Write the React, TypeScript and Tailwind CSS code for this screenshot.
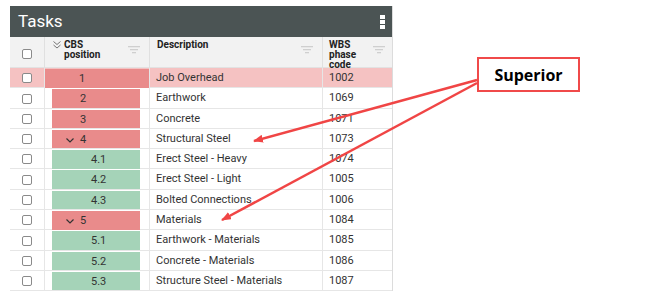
import React from 'react';

interface TaskRow {
  cbs: string;
  level: number;
  expandable?: boolean;
  superior?: boolean;
  description: string;
  wbs: string;
  selected?: boolean;
}

const rows: TaskRow[] = [
  { cbs: '1', level: 0, superior: true, description: 'Job Overhead', wbs: '1002', selected: true },
  { cbs: '2', level: 0, superior: true, description: 'Earthwork', wbs: '1069' },
  { cbs: '3', level: 0, superior: true, description: 'Concrete', wbs: '1071' },
  { cbs: '4', level: 0, superior: true, expandable: true, description: 'Structural Steel', wbs: '1073' },
  { cbs: '4.1', level: 1, description: 'Erect Steel - Heavy', wbs: '1074' },
  { cbs: '4.2', level: 1, description: 'Erect Steel - Light', wbs: '1005' },
  { cbs: '4.3', level: 1, description: 'Bolted Connections', wbs: '1006' },
  { cbs: '5', level: 0, superior: true, expandable: true, description: 'Materials', wbs: '1084' },
  { cbs: '5.1', level: 1, description: 'Earthwork - Materials', wbs: '1085' },
  { cbs: '5.2', level: 1, description: 'Concrete - Materials', wbs: '1086' },
  { cbs: '5.3', level: 1, description: 'Structure Steel - Materials', wbs: '1087' },
];

const Checkbox = () => (
  <span className="block w-[10px] h-[10px] rounded-[2px] border border-[#8a8a8a] bg-white" />
);

const FilterIcon = () => (
  <svg width="12" height="8" viewBox="0 0 12 8" className="shrink-0">
    <rect x="0" y="0" width="12" height="1.3" fill="#cfcfcf" />
    <rect x="2" y="3" width="8" height="1.3" fill="#cfcfcf" />
    <rect x="4" y="6" width="4" height="1.3" fill="#cfcfcf" />
  </svg>
);

const Chevron = () => (
  <svg width="8" height="5" viewBox="0 0 8 5" className="mr-[4px]">
    <path d="M0.5 0.5 L4 4 L7.5 0.5" stroke="#333" strokeWidth="1.2" fill="none" />
  </svg>
);

const App: React.FC = () => {
  return (
    <div className="relative w-[646px] h-[292px] overflow-hidden bg-white font-['Roboto',sans-serif]">
      <div className="ml-[10px] mt-[6px] w-[383px] border-r border-[#dcdcdc]">
        <div className="h-[31px] bg-[#4b5454] flex items-center justify-between pl-[8px] pr-[7px]">
          <span className="text-white text-[17px] leading-none">Tasks</span>
          <div className="flex flex-col gap-[1px]">
            <span className="block w-[5px] h-[4px] bg-white" />
            <span className="block w-[5px] h-[4px] bg-white" />
            <span className="block w-[5px] h-[4px] bg-white" />
          </div>
        </div>

        <div className="grid grid-cols-[35px_105px_173px_70px] h-[31px] bg-[#f2f2f2] border-b border-[#e2e2e2] text-[10px] font-bold text-[#222] leading-[10px]">
          <div className="flex items-center justify-center border-r border-[#e0e0e0]">
            <Checkbox />
          </div>
          <div className="flex items-start pt-[3px] pl-[8px] pr-[9px] border-r border-[#e0e0e0]">
            <svg width="8" height="8" viewBox="0 0 8 8" className="mt-[1px] mr-[3px] shrink-0">
              <path d="M0.5 0.5 L4 3.5 L7.5 0.5 M0.5 4 L4 7 L7.5 4" stroke="#777" strokeWidth="1" fill="none" />
            </svg>
            <span className="flex-1">CBS<br />position</span>
            <span className="mt-[6px]"><FilterIcon /></span>
          </div>
          <div className="flex items-start pt-[3px] pl-[7px] pr-[9px] border-r border-[#e0e0e0]">
            <span className="flex-1">Description</span>
            <span className="mt-[6px]"><FilterIcon /></span>
          </div>
          <div className="flex items-start pt-[3px] pl-[6px] pr-[8px]">
            <span className="flex-1">WBS<br />phase<br />code</span>
            <span className="mt-[6px]"><FilterIcon /></span>
          </div>
        </div>

        {rows.map(row => (
          <div
            key={row.cbs}
            className={`grid grid-cols-[35px_105px_173px_70px] h-[20.3px] border-b border-[#e6e6e6] text-[11px] text-[#333] ${row.selected ? 'bg-[#f5c2c2]' : 'bg-white'}`}
          >
            <div className="flex items-center justify-center border-r border-[#e6e6e6]">
              <Checkbox />
            </div>
            <div className={`flex items-stretch py-[1px] border-r border-[#e6e6e6] ${row.selected ? 'px-0' : 'pl-[7px] pr-[9px]'}`}>
              <div
                className={`flex-1 flex items-center pt-[2px] ${row.superior ? 'bg-[#e98b8b]' : 'bg-[#a5d3b8]'} ${row.selected ? 'pl-[34px]' : row.level === 0 ? 'pl-[28px]' : 'pl-[39px]'}`}
              >
                {row.expandable && <span className="-ml-[14px] mr-[2px] flex"><Chevron /></span>}
                {row.cbs}
              </div>
            </div>
            <div className="flex items-center pl-[6px] border-r border-[#e6e6e6]">{row.description}</div>
            <div className="flex items-center pl-[6px]">{row.wbs}</div>
          </div>
        ))}
      </div>

      <div className="absolute left-[477px] top-[57px] w-[103px] h-[35px] border-2 border-[#f04a4a] bg-white flex items-center justify-center font-['Open_Sans',sans-serif] font-bold text-[16px] text-black">
        Superior
      </div>

      <svg className="absolute left-0 top-0 pointer-events-none" width="646" height="292" viewBox="0 0 646 292">
        <defs>
          <marker id="head" markerWidth="10" markerHeight="8" refX="9" refY="4" orient="auto" markerUnits="userSpaceOnUse">
            <path d="M0 0 L10 4 L0 8 Z" fill="#f04545" />
          </marker>
        </defs>
        <line x1="477" y1="80" x2="254" y2="141" stroke="#f04545" strokeWidth="2.5" markerEnd="url(#head)" />
        <line x1="477" y1="83" x2="222" y2="220" stroke="#f04545" strokeWidth="2.5" markerEnd="url(#head)" />
      </svg>
    </div>
  );
};

export default App;
